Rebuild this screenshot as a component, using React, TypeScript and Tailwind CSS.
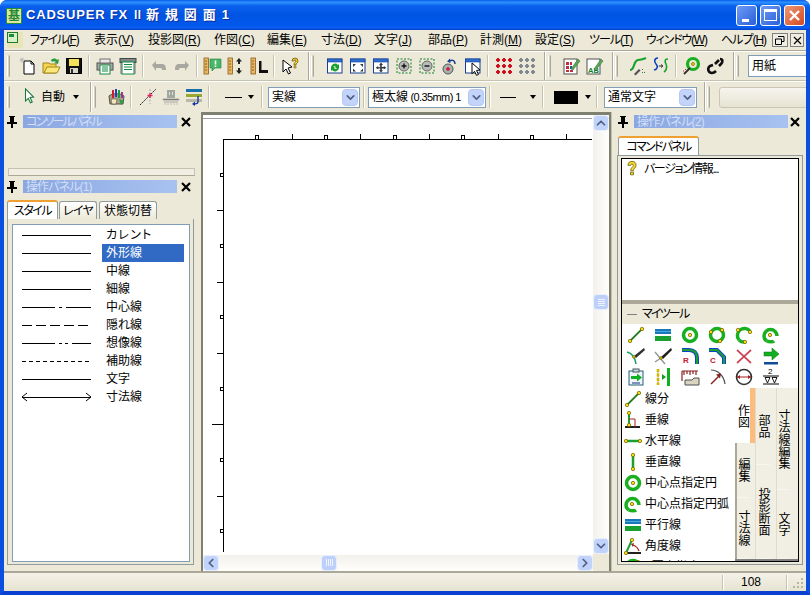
import React from 'react';
import { ChevronDown, ChevronUp, ChevronLeft, ChevronRight } from 'lucide-react';

const Svg: React.FC<{ children: React.ReactNode; s?: number }> = ({ children, s = 20 }) => (
    <svg width={s} height={s} viewBox="0 0 20 20" className="flex-none">{children}</svg>
);

const Dot = ({ x, y, r = 1.7 }: { x: number; y: number; r?: number }) => (
    <circle cx={x} cy={y} r={r} fill="#f6dc10" stroke="#6b5a00" strokeWidth="0.7" />
);

const Ruler = ({ x = 3 }: { x?: number }) => (
    <g>
        <rect x={x} y="2" width="4.5" height="16" fill="#e8b860" stroke="#8a5a20" strokeWidth="0.8" />
        <path d={`M${x + 1} 5h2M${x + 1} 8h2M${x + 1} 11h2M${x + 1} 14h2`} stroke="#7a4a10" strokeWidth="0.8" />
    </g>
);

const Win = ({ children }: { children?: React.ReactNode }) => (
    <g>
        <rect x="2.5" y="3" width="14.5" height="14" fill="#fff" stroke="#17408f" />
        <rect x="2.5" y="3" width="14.5" height="3" fill="#2e6fd6" stroke="#17408f" strokeWidth="0.6" />
        {children}
    </g>
);

const DotGrid = ({ c }: { c: string }) => (
    <g fill={c}>
        {[4, 10, 16].map(y => [4, 10, 16].map(x => (
            <path key={`${x}-${y}`} d={`M${x - 1} ${y - 2}h2v1h1v2h-1v1h-2v-1h-1v-2h1z`} />
        )))}
    </g>
);

const DashBox = ({ children }: { children: React.ReactNode }) => (
    <g>
        <rect x="3" y="3" width="14" height="14" fill="none" stroke="#108030" strokeDasharray="2 1.5" />
        <circle cx="10" cy="10" r="5" fill="#b8bcb8" stroke="#606860" />
        {children}
    </g>
);

const Sheet = ({ children }: { children: React.ReactNode }) => (
    <g>
        <rect x="3" y="3" width="13" height="15" fill="#fff" stroke="#505050" />
        {children}
        <path d="M10 13L17 3l2 2-7 9z" fill="#58a858" stroke="#306830" strokeWidth="0.5" />
    </g>
);

const I = {
    doc: <Svg><path d="M6 5h7l3 3v10H6z" fill="#fff" stroke="#000" /><path d="M13 5v3h3" fill="none" stroke="#000" /><path d="M4 1.5v5M1.5 4h5M2.5 2.5l3 3M5.5 2.5l-3 3" stroke="#b8b8b8" strokeWidth="1" /></Svg>,
    open: <Svg><path d="M2 7h6l1 1h6v9H2z" fill="#f5d34c" stroke="#a08820" /><path d="M3 17l3-6h13l-3 6z" fill="#fbe77a" stroke="#a08820" /><path d="M10 4c2-2 5-2 6 0l2-1-1 5-4-1 2-1c-1-1-3-1-4 0z" fill="#2a9a3a" /></Svg>,
    save: <Svg><rect x="2.5" y="2.5" width="15" height="15" fill="#101010" stroke="#000" /><rect x="5" y="3" width="10" height="7" fill="#f3e25a" /><rect x="6" y="12" width="8" height="5" fill="#d8d8c8" /><rect x="7" y="13" width="2" height="4" fill="#303030" /></Svg>,
    print: <Svg><rect x="2" y="7" width="16" height="7" fill="#a8a8a8" stroke="#505050" /><rect x="5" y="3" width="10" height="4" fill="#e8e8e8" stroke="#707070" /><rect x="5" y="9" width="10" height="9" fill="#fff" stroke="#108a40" /><path d="M7 11h6M7 13h6M7 15h6" stroke="#108a40" /></Svg>,
    plot: <Svg><rect x="2" y="2.5" width="16" height="4" fill="#808888" stroke="#404848" /><rect x="4" y="6" width="12" height="12" fill="#fff" stroke="#108a40" /><path d="M6 8.5h8M6 11h8M6 13.5h8" stroke="#108a40" /><path d="M3 7v11M17 7v11" stroke="#707070" /></Svg>,
    undo: <Svg><path d="M3 9l4-4v3h6c3 0 4 2 4 6h-4c0-2-1-2-3-2H7v3z" fill="#a8a8a0" /></Svg>,
    redo: <Svg><path d="M17 9l-4-4v3H7c-3 0-4 2-4 6h4c0-2 1-2 3-2h3v3z" fill="#a8a8a0" /></Svg>,
    rulerBalloon: <Svg><Ruler x={1} /><path d="M7 3h11v9h-6l-3 3v-3H7z" fill="#48b868" stroke="#208040" strokeWidth="0.6" /><path d="M12.5 4.5v4M12.5 9.5v1.5" stroke="#fff" strokeWidth="1.6" /></Svg>,
    rulerArrows: <Svg><Ruler x={2} /><path d="M13 2l3 3.5h-2V8h-2V5.5h-2zM13 18l3-3.5h-2V12h-2v2.5h-2z" fill="#202020" /></Svg>,
    rulerL: <Svg><Ruler x={2} /><path d="M10 5h2.5v9H19v3h-9z" fill="#101010" /></Svg>,
    cursorQ: <Svg><path d="M3 4l9 7-4 1 2.5 5-2 1-2.5-5-3 3z" fill="#fff" stroke="#000" /><path d="M12 5a3 3 0 116 0c0 2-2 2-2 4h-2c0-3 2-3 2-4a1 1 0 00-2 0z" fill="#f0d030" stroke="#604800" strokeWidth="0.7" /><rect x="14" y="10" width="2" height="2" fill="#f0d030" stroke="#604800" strokeWidth="0.5" /></Svg>,
    winCycle: <Svg><Win><path d="M6 11a4 4 0 017-2l1-1v4h-4l1-1a2 2 0 00-3 0zM14 12a4 4 0 01-7 2l-1 1v-4h4l-1 1a2 2 0 003 0z" fill="#18a030" /></Win></Svg>,
    winFit: <Svg><Win><path d="M5 8h3L5 11zM15 8h-3l3 3zM5 15.5h3l-3-3zM15 15.5h-3l3-3z" fill="#303840" /></Win></Svg>,
    winMove: <Svg><Win><path d="M10 6.5l2 2.5h-1.2v2h2V10l2.500 1.800-2.500 1.800v-1.200h-2v1.800H12l-2 2.200-2-2.200h1.200v-1.800h-2v1.200L4.700 11.800 7.200 10v1.200h2v-2H8z" fill="#303840" /></Win></Svg>,
    zoomIn: <Svg><DashBox><path d="M7.500 10h5M10 7.500v5" stroke="#101010" strokeWidth="1.400" /></DashBox></Svg>,
    zoomOut: <Svg><DashBox><path d="M7.500 10h5" stroke="#101010" strokeWidth="1.400" /></DashBox></Svg>,
    zoomBack: <Svg><circle cx="8" cy="13" r="5" fill="#a8b0b0" stroke="#505858" /><path d="M6 13h4M8 11v4" stroke="#d01828" strokeWidth="1.400" /><path d="M9 6c2-3 6-2 6 2" fill="none" stroke="#183a90" strokeWidth="1.400" /><path d="M10 2.500L7 5.500l3.500 1.500z" fill="#183a90" /></Svg>,
    winCursor: <Svg><Win /><path d="M9 7l8 7-3.500.5 2 4-2 .8-2-4-2.500 2.500z" fill="#fff" stroke="#000" /></Svg>,
    dotsRed: <Svg><DotGrid c="#d01020" /></Svg>,
    dotsGray: <Svg><DotGrid c="#808890" /></Svg>,
    sheetGrid: <Svg><Sheet><path d="M5 6h3v3H5zM9 6h2v3H9zM5 10h3v3H5zM5 14h3v2H5zM9 14h3v2H9z" fill="#c03040" /><path d="M9 10h2v3H9z" fill="#205890" /></Sheet></Svg>,
    sheetAB: <Svg><Sheet><text x="4" y="16.500" fontSize="7.500" fontWeight="700" fill="#108030" fontFamily="Liberation Sans">AB</text></Sheet></Svg>,
    sCurve: <Svg><path d="M2 14c5 0 3-9 8-10s3 0 8-2" fill="none" stroke="#18a030" strokeWidth="2.200" /><path d="M6 18l5-5 1.500 1.500-5 5z" fill="#505050" /><path d="M14 13l1 1M16 16l1 1M14 17l1-1" stroke="#308040" /></Svg>,
    sSplit: <Svg><path d="M7 2C3 2 3 6 5 8s2 5-2 6" fill="none" stroke="#1040c0" strokeWidth="1.600" /><path d="M17 3c-4 0-3 3-2 5s1 6-2 8" fill="none" stroke="#18a030" strokeWidth="1.600" /><path d="M8 10h3M10 8.500l2 1.500-2 1.500" stroke="#303030" fill="none" /></Svg>,
    ringWand: <Svg><circle cx="11" cy="8" r="5.500" fill="none" stroke="#18b020" strokeWidth="3.200" /><Dot x={11} y={8} r={1.500} /><path d="M2 18l6-6" stroke="#303030" strokeWidth="1.800" /><path d="M3 13l1 1M1 15h1" stroke="#c03040" /></Svg>,
    chain: <Svg><path d="M15 3c3 0 3 3 1 5l-2 2M8 9l-3 1c-3 2-2 7 2 7 2 0 3-1 4-2" fill="none" stroke="#101010" strokeWidth="2.600" /><path d="M14 4l-4 4" stroke="#101010" strokeWidth="2.600" /></Svg>,
    palette: <Svg><path d="M3 9c3-3 12-3 15 0l-1 8H4z" fill="#a8a090" stroke="#505040" /><rect x="6" y="3" width="2" height="8" fill="#d02030" /><rect x="9" y="2" width="2" height="8" fill="#2040c0" /><rect x="12" y="3" width="2" height="8" fill="#18a030" /><rect x="15" y="5" width="2" height="6" fill="#a030a0" /><path d="M5 12h6l-1 5H6z" fill="#f0e8c0" stroke="#605030" strokeWidth="0.6" /><path d="M13 12l5 2-3 4z" fill="#28a040" /></Svg>,
    cross: <Svg><path d="M2 18L11 9M13 7l5-5" stroke="#202020" strokeDasharray="2 1" /><path d="M12 2v15" stroke="#a8a8a8" strokeDasharray="2 1.500" /><path d="M12 6v5M9.500 8.500h5" stroke="#e02060" strokeWidth="1.400" /></Svg>,
    dim: <Svg><path d="M6 3h8v8H6z" fill="#a0a8a0" /><path d="M8 5h1v3H8zM11 5h1v3h-1z" fill="#e0e0d8" /><path d="M2 12h16v1H2zM3 15h14" stroke="#a8a8a0" /><path d="M3 17h14" stroke="#c0c0b8" strokeDasharray="2 1" /></Svg>,
    layers: <Svg><rect x="2" y="2" width="16" height="3" fill="#1870a8" /><rect x="2" y="7" width="16" height="3" fill="#98a830" /><rect x="2" y="12" width="16" height="3" fill="#b8b8a8" /><path d="M14 9v6c0 2-3 2-5 2" fill="none" stroke="#1838a0" strokeWidth="1.400" /><path d="M11 14.500L8 17l3 2z" fill="#1838a0" /></Svg>,
    help: <Svg s={18}><path d="M5.500 6a4.500 4.500 0 119 0c0 3-3 3-3 6H8.500c0-4 3-4 3-6a1.500 1.500 0 00-3 0z" fill="#f2dc30" stroke="#605000" strokeWidth="0.800" /><rect x="8.500" y="13.500" width="3" height="3" fill="#f2dc30" stroke="#605000" strokeWidth="0.800" /></Svg>,
    seg: <Svg><path d="M4 16L16 4" stroke="#3a9a30" strokeWidth="2" /><path d="M4 16L16 4" stroke="#203a20" strokeWidth="0.600" /><Dot x={4} y={16} /><Dot x={16} y={4} /></Svg>,
    para: <Svg><rect x="2" y="4" width="16" height="5" fill="#1878b8" /><rect x="2" y="6" width="16" height="1" fill="#48a8e0" /><rect x="2" y="11" width="16" height="5" fill="#18a030" /></Svg>,
    ring: <Svg><circle cx="10" cy="10" r="6.500" fill="#fff" stroke="#18b020" strokeWidth="3.500" /><Dot x={10} y={10} /></Svg>,
    ring3: <Svg><circle cx="10" cy="10" r="6.500" fill="none" stroke="#18b020" strokeWidth="3.500" /><Dot x={4} y={7} /><Dot x={15} y={5} /><Dot x={13} y={16} /></Svg>,
    arc3: <Svg><path d="M16 6A7 7 0 105 15" fill="none" stroke="#18b020" strokeWidth="3.500" /><path d="M5 15a7 7 0 006 2" fill="none" stroke="#18b020" strokeWidth="3.500" /><Dot x={4} y={5} /><Dot x={16} y={7} /><Dot x={11} y={17} /></Svg>,
    arcC: <Svg><path d="M16 11A6.500 6.500 0 103 11c0 2 1 4 3 5" fill="none" stroke="#18b020" strokeWidth="3.500" /><path d="M6 16c2 1 6 1 7 0" fill="none" stroke="#18b020" strokeWidth="3.500" /><Dot x={9} y={10} /></Svg>,
    curvePen: <Svg><path d="M1 6c4 1 8 5 9 12" fill="none" stroke="#18a060" strokeWidth="1.600" /><path d="M8 10L18 2l1 2-9 8z" fill="#303030" /><Dot x={8} y={11} r={1.300} /></Svg>,
    trimPen: <Svg><path d="M2 6l10 12M2 16l6-4" stroke="#909890" strokeWidth="1.400" /><path d="M8 11L18 2l1 2-9 9z" fill="#202020" /><Dot x={8} y={12} r={1.300} /></Svg>,
    filletR: <Svg><path d="M2 4h7c5 0 8 3 8 8v6" fill="none" stroke="#1040d0" strokeWidth="4" /><path d="M2 4h7c5 0 8 3 8 8v6" fill="none" stroke="#18a030" strokeWidth="2" /><text x="3" y="17" fontSize="8" fontWeight="700" fill="#c02030" fontFamily="Liberation Sans">R</text></Svg>,
    filletC: <Svg><path d="M2 4h8l7 7v7" fill="none" stroke="#1040d0" strokeWidth="4" /><path d="M2 4h8l7 7v7" fill="none" stroke="#18a030" strokeWidth="2" /><text x="3" y="17" fontSize="8" fontWeight="700" fill="#c02030" fontFamily="Liberation Sans">C</text></Svg>,
    redX: <Svg><path d="M3 4l14 13M17 4L3 17" stroke="#d87080" strokeWidth="2" /><path d="M3 4l14 13M17 4L3 17" stroke="#c02030" strokeWidth="0.800" /></Svg>,
    arrowBar: <Svg><path d="M3 6h8V2l7 6-7 6v-4H3z" fill="#10b020" stroke="#087010" strokeWidth="0.500" /><rect x="3" y="16" width="14" height="2.500" fill="#104a98" /></Svg>,
    clip: <Svg><rect x="3" y="4" width="14" height="14" fill="#f0f4f8" stroke="#206078" /><rect x="7" y="2" width="6" height="3" fill="#d0d8d8" stroke="#405860" /><path d="M5 9h6V6.500l5 4-5 4V12H5z" fill="#10b020" /><path d="M6 16h8" stroke="#103080" /></Svg>,
    mirror: <Svg><path d="M5 2v16" stroke="#f0d820" strokeWidth="3" strokeDasharray="3 1.500" /><path d="M5 2v16" stroke="#605000" strokeWidth="0.500" /><path d="M9 7l4 3-4 3z" fill="#10a020" /><rect x="14" y="1" width="3" height="18" fill="#10b020" /></Svg>,
    redRuler: <Svg><path d="M2 4h16M4 4v4M7 4v3M10 4v4M13 4v3M16 4v4M2 4v10" stroke="#8a2020" strokeWidth="1.200" fill="none" /><path d="M5 18v-5h7l2-2h5v7z" fill="#d8d4c0" stroke="#505050" /></Svg>,
    arrowArc: <Svg><path d="M4 3c7 0 13 6 14 14" fill="none" stroke="#505050" strokeWidth="1.200" /><path d="M4 17L13 8" stroke="#8a2020" strokeWidth="1.400" /><path d="M14 6.500l-1 5-4-4z" fill="#8a2020" /></Svg>,
    circleDim: <Svg><circle cx="10" cy="10" r="7.500" fill="#fff" stroke="#303030" strokeWidth="1.600" /><path d="M3 10h14" stroke="#a02020" /><path d="M3 10l3-2v4zM17 10l-3-2v4z" fill="#a02020" /></Svg>,
    triDim: <Svg><text x="7" y="7" fontSize="8" fill="#000" fontFamily="Liberation Sans">2</text><path d="M2 9h16M2 17h16" stroke="#000" /><path d="M4 10.500h5L6.500 16zM11 10.500h5L13.500 16z" fill="#fff" stroke="#000" strokeWidth="0.900" /></Svg>,
    perp: <Svg><path d="M6 2v14" stroke="#18a030" strokeWidth="2" /><path d="M2 17h15" stroke="#202020" strokeWidth="2" /><path d="M6 9h6v8" fill="none" stroke="#b02020" /><Dot x={6} y={3} /><Dot x={6} y={15} /></Svg>,
    horiz: <Svg><path d="M3 10h14" stroke="#18a030" strokeWidth="2.500" /><Dot x={3} y={10} /><Dot x={17} y={10} /></Svg>,
    vert: <Svg><path d="M10 3v14" stroke="#18a030" strokeWidth="2.500" /><Dot x={10} y={3} /><Dot x={10} y={17} /></Svg>,
    angle: <Svg><path d="M3 17L9 4" stroke="#18a030" strokeWidth="2" /><path d="M3 17h15" stroke="#202020" strokeWidth="2" /><path d="M10 9c3 1 5 3 6 6" fill="none" stroke="#a02020" strokeWidth="1.200" /><path d="M8 8l3-1-1 4z" fill="#a02020" /><Dot x={9} y={4} /><Dot x={3} y={17} /></Svg>,
};

const Grip = () => (
    <div className="h-[22px] w-[3px] flex-none border-l border-white bg-[#d6d2c0] border-r border-r-[#aca899] rounded-sm" />
);

const Sep = () => (
    <div className="flex w-[8px] flex-none justify-center">
        <div className="h-[22px] w-[2px] border-l border-[#c5c2b0] border-r border-r-white" />
    </div>
);

const Band = () => <div className="h-full w-[2px] flex-none border-l border-[#aca899] border-r border-r-white" />;

const Tool = ({ icon }: { icon: React.ReactNode }) => (
    <div className="flex h-[23px] w-[23px] flex-none items-center justify-center">{icon}</div>
);

const Caret = () => <div className="h-0 w-0 flex-none border-x-[3.5px] border-t-[4px] border-x-transparent border-t-black" />;

const Combo = ({ children, w }: { children: React.ReactNode; w: string }) => (
    <div className={`${w} flex h-[21px] flex-none items-center border border-[#7f9db9] bg-white pl-[3px] pr-[1px]`}>
        <span className="flex-1 overflow-hidden whitespace-nowrap text-[12px]">{children}</span>
        <div className="flex h-[17px] w-[16px] flex-none items-center justify-center rounded-sm border border-[#b5c8f3] bg-[#c3d3fa]">
            <ChevronDown size={13} strokeWidth={3} color="#4d6185" />
        </div>
    </div>
);

const ScrollBtn = ({ children }: { children: React.ReactNode }) => (
    <div className="flex h-[16px] w-[16px] flex-none items-center justify-center rounded-sm border border-[#e8effd] bg-[#c1d3fb]">{children}</div>
);

const ScrollThumb = ({ vertical }: { vertical?: boolean }) => (
    <div className={`flex h-[16px] w-[16px] flex-none items-center justify-center rounded-sm border border-[#e8effd] bg-[#bdd0fa] ${vertical ? 'flex-col gap-[1px]' : 'gap-[1px]'}`}>
        {[0, 1, 2, 3].map(i => (
            <div key={i} className={vertical ? 'h-[1px] w-[7px] bg-[#eef3fe]' : 'h-[7px] w-[1px] bg-[#eef3fe]'} />
        ))}
    </div>
);

const Pin = () => (
    <svg width="10" height="12" viewBox="0 0 10 12" className="flex-none">
        <path d="M2 0h6v1H7v5h3v2H6v4H4V8H0V6h3V1H2z" fill="#000" />
    </svg>
);

const PanelClose = () => (
    <svg width="10" height="10" viewBox="0 0 10 10" className="flex-none">
        <path d="M1 1l8 8M9 1L1 9" stroke="#000" strokeWidth="2.200" />
    </svg>
);

const PanelHeader = ({ title, pinClass, closeClass, titleClass }: { title: string; pinClass: string; closeClass: string; titleClass: string }) => (
    <div className="flex h-[13px] flex-none items-center">
        <div className={`flex flex-none justify-center ${pinClass}`}><Pin /></div>
        <div className={`${titleClass} flex h-[13px] w-[154px] flex-none items-center bg-[linear-gradient(90deg,#8aa7e1,#a8c2f0)] pl-[3px] text-[12px] leading-none text-[#d3dff7]`}>{title}</div>
        <div className={`flex flex-1 justify-center ${closeClass}`}><PanelClose /></div>
    </div>
);

const MENUS: [string, string, string][] = [
    ['ファイル(', 'F', 'w-[64px] tracking-[-1.2px]'],
    ['表示(', 'V', 'w-[54px]'],
    ['投影図(', 'R', 'w-[66px]'],
    ['作図(', 'C', 'w-[53px]'],
    ['編集(', 'E', 'w-[54px]'],
    ['寸法(', 'D', 'w-[53px]'],
    ['文字(', 'J', 'w-[54px]'],
    ['部品(', 'P', 'w-[52px]'],
    ['計測(', 'M', 'w-[55px]'],
    ['設定(', 'S', 'w-[54px]'],
    ['ツール(', 'T', 'w-[57px] tracking-[-1px]'],
    ['ウィンドウ(', 'W', 'w-[75px] tracking-[-1.2px]'],
    ['ヘルプ(', 'H', 'w-[51px] tracking-[-1px]'],
];

const LINE_STYLES = ['カレント', '外形線', '中線', '細線', '中心線', '隠れ線', '想像線', '補助線', '文字', '寸法線'];

const LineSample = ({ index }: { index: number }) => {
    const dash = index === 4 ? '33 4 3 4 26' : index === 5 ? '10 4' : index === 6 ? '33 4 3 3 3 4 20' : index === 7 ? '4 3' : undefined;
    return (
        <svg width="72" height="18" viewBox="0 0 72 18" className="flex-none" shapeRendering="crispEdges">
            <line x1="1" y1="9" x2="70" y2="9" stroke="#000" strokeDasharray={dash} />
            {index === 9 && (
                <g shapeRendering="auto">
                    <path d="M6 5L1 9l5 4M65 5l5 4-5 4" fill="none" stroke="#000" />
                </g>
            )}
        </svg>
    );
};

const MY_TOOLS = [
    I.seg, I.para, I.ring, I.ring3, I.arc3, I.arcC,
    I.curvePen, I.trimPen, I.filletR, I.filletC, I.redX, I.arrowBar,
    I.clip, I.mirror, I.redRuler, I.arrowArc, I.circleDim, I.triDim,
];

const COMMANDS: [React.ReactNode, string][] = [
    [I.seg, '線分'],
    [I.perp, '垂線'],
    [I.horiz, '水平線'],
    [I.vert, '垂直線'],
    [I.ring, '中心点指定円'],
    [I.arcC, '中心点指定円弧'],
    [I.para, '平行線'],
    [I.angle, '角度線'],
    [I.ring3, '3要素指定円'],
];

const SideTab = ({ text, h }: { text: string; h: string }) => (
    <div className={`${h} flex items-center justify-center border-b border-[#f7f6ef]`}>
        <span className="text-[12px] leading-none [writing-mode:vertical-rl]">{text}</span>
    </div>
);

// 図枠の目盛り（座標はウィンドウ基準のまま）
const Sheet2D = () => (
    <svg width="389" height="437" viewBox="203 116 389 437" className="block" shapeRendering="crispEdges">
        <line x1="203" y1="119.500" x2="592" y2="119.500" stroke="#a0a0a0" />
        <path d="M223.500 553V140.500H592" fill="none" stroke="#000" />
        {[257, 326, 395, 463, 532].map(x => <rect key={x} x={x - 1.500} y="136.500" width="3" height="4" fill="none" stroke="#000" />)}
        {[292, 360, 429, 498, 566].map(x => <line key={x} x1={x + 0.500} y1="135" x2={x + 0.500} y2="140" stroke="#000" />)}
        {[176, 247, 318, 390, 461, 532].map(y => <rect key={y} x="220" y={y - 1.500} width="3" height="3" fill="none" stroke="#000" />)}
        {[211, 283, 354, 497].map(y => <line key={y} x1="217" y1={y + 0.500} x2="223" y2={y + 0.500} stroke="#000" />)}
        <line x1="212" y1="425.500" x2="223" y2="425.500" stroke="#000" />
    </svg>
);

const App: React.FC = () => {
    return (
        <div className="flex h-[595px] w-[810px] flex-col overflow-hidden rounded-t-[7px] bg-[#0a4fe0] font-['Liberation_Sans','Noto_Sans_CJK_JP',sans-serif] text-black [font-feature-settings:'palt']">
            {/* title bar */}
            <div className="flex h-[30px] flex-none items-center bg-[linear-gradient(180deg,#0a5fe8_0%,#2b90ff_8%,#0a60ec_20%,#0054e3_50%,#0058ec_85%,#0a5df0_92%,#0040c8_100%)] pl-[6px]">
                <div className="mt-[2px] flex h-[16px] w-[16px] flex-none items-center justify-center border border-[#2a8a40] bg-[#dfe8a0] text-[12px] font-bold leading-none text-[#1f8a3a]">基</div>
                <div className="ml-[4px] flex items-center whitespace-pre text-[13px] font-bold text-white [text-shadow:1px_1px_0_#0f2f9a]">
                    <span className="tracking-[0.8px]">CADSUPER FX</span>
                    <span className="ml-[4px] w-[10px] text-[11px]">Ⅱ</span>
                    <span className="ml-[4px] tracking-[1.15px]">新 規 図 面 1</span>
                </div>
                <div className="ml-auto mr-[5px] flex gap-[3px]">
                    <div className="flex h-[21px] w-[21px] items-end justify-start rounded-[3px] border border-white bg-[linear-gradient(135deg,#6d9cf5,#2a5fd8)] pb-[3px] pl-[5px]">
                        <div className="h-[3px] w-[7px] bg-white" />
                    </div>
                    <div className="flex h-[21px] w-[21px] items-center justify-center rounded-[3px] border border-white bg-[linear-gradient(135deg,#6d9cf5,#2a5fd8)]">
                        <div className="h-[12px] w-[13px] border border-t-[3px] border-white" />
                    </div>
                    <div className="flex h-[21px] w-[21px] items-center justify-center rounded-[3px] border border-white bg-[linear-gradient(135deg,#ea9a78,#d6481e)]">
                        <svg width="13" height="13" viewBox="0 0 13 13"><path d="M2 2l9 9M11 2l-9 9" stroke="#fff" strokeWidth="2.400" /></svg>
                    </div>
                </div>
            </div>

            <div className="flex min-h-0 flex-1 flex-col overflow-hidden border-x-4 border-b-4 border-x-[#0a4fe0] border-b-[#0a3fd0] bg-[#ece9d8]">
                {/* menu bar */}
                <div className="flex h-[21px] flex-none items-center border-b border-[#aca899] text-[12px]">
                    <div className="ml-[3px] mr-[7px] flex h-[16px] w-[16px] flex-none items-start bg-[#e8e6b8]">
                        <div className="h-[11px] w-[11px] border border-[#1f7a2c] bg-[#d8f0c8]">
                            <div className="m-[1px] h-[3px] w-[5px] bg-[#1f8a3a]" />
                        </div>
                    </div>
                    {MENUS.map(([label, key, w]) => (
                        <div key={key} className={`${w} flex-none whitespace-nowrap`}>{label}<span className="underline">{key}</span>)</div>
                    ))}
                    <div className="flex h-[14px] w-[16px] flex-none items-center justify-center border border-[#808080] bg-[#f0eee2]">
                        <svg width="10" height="9" viewBox="0 0 10 9"><path d="M3 .5h6v5H7M.5 3h6v5.500h-6z" fill="none" stroke="#000" /></svg>
                    </div>
                    <div className="ml-[2px] flex h-[14px] w-[14px] flex-none items-center justify-center border border-[#808080] bg-[#f0eee2]">
                        <svg width="9" height="9" viewBox="0 0 9 9"><path d="M1 1l7 7M8 1L1 8" stroke="#000" strokeWidth="1.200" /></svg>
                    </div>
                </div>

                {/* standard toolbar */}
                <div className="flex h-[30px] flex-none items-center overflow-hidden border-b border-t border-b-[#c5c2b0] border-t-white">
                    <div className="w-[3px] flex-none" /><Grip /><div className="w-[6px] flex-none" />
                    <Tool icon={I.doc} /><Tool icon={I.open} /><Tool icon={I.save} />
                    <Sep />
                    <Tool icon={I.print} /><Tool icon={I.plot} />
                    <Sep />
                    <Tool icon={I.undo} /><Tool icon={I.redo} />
                    <Sep />
                    <Tool icon={I.rulerBalloon} /><Tool icon={I.rulerArrows} /><Tool icon={I.rulerL} />
                    <Sep />
                    <Tool icon={I.cursorQ} />
                    <div className="w-[7px] flex-none" /><Band /><div className="w-[1px] flex-none" /><Grip /><div className="w-[9px] flex-none" />
                    <Tool icon={I.winCycle} /><Tool icon={I.winFit} /><Tool icon={I.winMove} /><Tool icon={I.zoomIn} /><Tool icon={I.zoomOut} /><Tool icon={I.zoomBack} /><Tool icon={I.winCursor} />
                    <Sep />
                    <Tool icon={I.dotsRed} /><Tool icon={I.dotsGray} />
                    <div className="w-[6px] flex-none" /><Band /><div className="w-[2px] flex-none" /><Grip /><div className="w-[8px] flex-none" />
                    <Tool icon={I.sheetGrid} /><Tool icon={I.sheetAB} />
                    <div className="w-[7px] flex-none" /><Band /><div className="w-[1px] flex-none" /><Grip /><div className="w-[8px] flex-none" />
                    <Tool icon={I.sCurve} /><Tool icon={I.sSplit} />
                    <Sep />
                    <Tool icon={I.ringWand} /><Tool icon={I.chain} />
                    <div className="w-[7px] flex-none" /><Band /><div className="w-[1px] flex-none" /><Grip /><div className="w-[9px] flex-none" />
                    <div className="flex h-[22px] w-[70px] flex-none items-center border border-[#7f9db9] bg-white pl-[3px] text-[12px]">用紙</div>
                </div>

                {/* property toolbar */}
                <div className="flex h-[31px] flex-none items-center overflow-hidden border-t border-white">
                    <div className="w-[3px] flex-none" /><Grip />
                    <div className="ml-[11px] flex w-[69px] flex-none items-center">
                        <Svg s={18}><path d="M5 1l9 9-4 .5 2.500 5-2 1-2.500-5L5 14.500z" fill="#fff" stroke="#18783a" strokeWidth="1.200" /></Svg>
                        <span className="ml-[2px] text-[12px]">自動</span>
                        <div className="ml-[8px]"><Caret /></div>
                    </div>
                    <Band /><div className="w-[1px] flex-none" /><Grip /><div className="w-[8px] flex-none" />
                    <Tool icon={I.palette} />
                    <Sep />
                    <div className="w-[1px] flex-none" />
                    <Tool icon={I.cross} /><Tool icon={I.dim} /><Tool icon={I.layers} />
                    <Sep />
                    <div className="ml-[12px] h-[1px] w-[17px] flex-none bg-black" />
                    <div className="ml-[6px]"><Caret /></div>
                    <div className="w-[4px] flex-none" /><Sep />
                    <div className="w-[2px] flex-none" />
                    <Combo w="w-[92px]">実線</Combo>
                    <Sep />
                    <Combo w="w-[118px]">極太線<span className="text-[11px] tracking-[-0.6px]"> (0.35mm) 1</span></Combo>
                    <Sep />
                    <div className="ml-[6px] h-[1px] w-[16px] flex-none bg-black" />
                    <div className="ml-[14px]"><Caret /></div>
                    <div className="w-[3px] flex-none" /><Sep />
                    <div className="ml-[7px] h-[13px] w-[24px] flex-none bg-black" />
                    <div className="ml-[7px]"><Caret /></div>
                    <div className="w-[2px] flex-none" /><Sep />
                    <div className="w-[3px] flex-none" />
                    <Combo w="w-[93px]">通常文字</Combo>
                    <div className="w-[7px] flex-none" /><Band /><div className="w-[1px] flex-none" /><Grip /><div className="w-[9px] flex-none" />
                    <div className="h-[21px] w-[90px] flex-none rounded-[3px] border border-[#c9c6b6] bg-[linear-gradient(180deg,#f6f5ee,#e6e3d2)]" />
                </div>

                {/* work area */}
                <div className="flex min-h-0 flex-1 border-b-2 border-[#aca899]">
                    {/* left dock */}
                    <div className="flex w-[197px] flex-none flex-col pt-[3px]">
                        <PanelHeader title="コンソールパネル" pinClass="w-[19px] pr-[4px]" closeClass="pr-[6px]" titleClass="tracking-[-1.8px]" />
                        <div className="h-[40px] flex-none" />
                        <div className="ml-[4px] mr-[6px] h-[8px] flex-none border border-[#c5c2b0] border-b-[#aca899] bg-[#f1efe3]" />
                        <div className="h-[4px] flex-none" />
                        <PanelHeader title="操作パネル(1)" pinClass="w-[19px] pr-[4px]" closeClass="pr-[6px]" titleClass="tracking-[-0.9px]" />
                        <div className="ml-[3px] mt-[7px] flex h-[19px] flex-none items-end text-[12px]">
                            <div className="flex h-[19px] w-[51px] items-center justify-center rounded-t-[3px] border-x border-[#919b9c] border-t-2 border-t-[#f0a030] bg-white tracking-[-1.5px]">スタイル</div>
                            <div className="ml-[1px] flex h-[18px] w-[38px] items-center justify-center rounded-t-[3px] border border-b-0 border-[#919b9c] bg-[linear-gradient(180deg,#fff,#ece9d8)] tracking-[-0.7px]">レイヤ</div>
                            <div className="ml-[2px] flex h-[18px] w-[58px] items-center justify-center rounded-t-[3px] border border-b-0 border-[#919b9c] bg-[linear-gradient(180deg,#fff,#ece9d8)]">状態切替</div>
                        </div>
                        <div className="ml-[3px] mr-[7px] flex-1 border border-t-0 border-[#919b9c] pb-[2px] pl-[4px] pr-[3px] pt-[5px]">
                            <div className="h-full border border-[#7f9db9] bg-white pt-[1px]">
                                {LINE_STYLES.map((name, i) => (
                                    <div key={name} className="flex h-[18px] items-center pl-[8px]">
                                        <LineSample index={i} />
                                        <div className={`ml-[9px] flex h-[18px] w-[82px] items-center pl-[4px] text-[12px] ${i === 1 ? 'bg-[#316ac5] text-white' : ''} ${i === 0 ? 'tracking-[1.2px]' : ''}`}>{name}</div>
                                    </div>
                                ))}
                            </div>
                        </div>
                        <div className="h-[6px] flex-none" />
                    </div>

                    {/* drawing area */}
                    <div className="flex w-[410px] flex-none flex-col border-l-2 border-r-2 border-t-[3px] border-[#808070] bg-white">
                        <div className="flex min-h-0 flex-1">
                            <div className="min-w-0 flex-1 overflow-hidden"><Sheet2D /></div>
                            <div className="flex w-[16px] flex-none flex-col bg-[linear-gradient(90deg,#f3f1ec,#fefefb)]">
                                <ScrollBtn><ChevronUp size={14} strokeWidth={3} color="#4d6185" /></ScrollBtn>
                                <div className="h-[163px] flex-none" />
                                <ScrollThumb vertical />
                                <div className="flex-1" />
                                <ScrollBtn><ChevronDown size={14} strokeWidth={3} color="#4d6185" /></ScrollBtn>
                            </div>
                        </div>
                        <div className="flex h-[17px] flex-none items-center">
                            <div className="flex flex-1 items-center bg-[linear-gradient(180deg,#f3f1ec,#fefefb)]">
                                <ScrollBtn><ChevronLeft size={14} strokeWidth={3} color="#4d6185" /></ScrollBtn>
                                <div className="w-[102px] flex-none" />
                                <ScrollThumb />
                                <div className="flex-1" />
                                <ScrollBtn><ChevronRight size={14} strokeWidth={3} color="#4d6185" /></ScrollBtn>
                            </div>
                            <div className="h-[17px] w-[16px] flex-none bg-[#ece9d8]" />
                        </div>
                    </div>

                    {/* right dock */}
                    <div className="flex min-w-0 flex-1 flex-col border-l border-[#c5c2b0] pt-[3px]">
                        <PanelHeader title="操作パネル(2)" pinClass="w-[22px]" closeClass="pr-[4px]" titleClass="tracking-[-0.7px]" />
                        <div className="ml-[6px] mt-[8px] flex h-[19px] w-[81px] flex-none items-center justify-center rounded-t-[3px] border-x border-[#919b9c] border-t-2 border-t-[#f0a030] bg-white text-[12px] tracking-[-1.7px]">コマンドパネル</div>
                        <div className="mb-[6px] ml-[5px] mr-[3px] flex min-h-0 flex-1 flex-col border border-[#919b9c] px-[3px] pb-[2px] pt-[2px]">
                            <div className="flex min-h-0 flex-1 flex-col border border-black bg-white">
                                <div className="flex h-[141px] flex-none items-start">
                                    <div className="ml-[1px] mt-[1px] flex h-[18px] items-center text-[12px]">
                                        {I.help}
                                        <span className="ml-[3px] tracking-[-1.4px]">バージョン情報...</span>
                                    </div>
                                </div>
                                <div className="h-[4px] flex-none bg-[#aca899]" />
                                <div className="flex h-[20px] flex-none items-center bg-[#ece9d8] pl-[5px] text-[12px]">
                                    <div className="h-[1px] w-[10px] bg-[#808080]" />
                                    <span className="ml-[5px] tracking-[-1.8px]">マイツール</span>
                                </div>
                                <div className="grid h-[64px] flex-none grid-cols-[repeat(6,27px)] items-center justify-items-center">
                                    {MY_TOOLS.map((icon, i) => <div key={i}>{icon}</div>)}
                                </div>
                                <div className="flex min-h-0 flex-1">
                                    <div className="min-w-0 flex-1 overflow-hidden">
                                        {COMMANDS.map(([icon, name]) => (
                                            <div key={name} className="flex h-[21px] items-center whitespace-nowrap pl-[1px] text-[12px]">
                                                {icon}
                                                <span className="ml-[2px]">{name}</span>
                                            </div>
                                        ))}
                                    </div>
                                    <div className="flex w-[63px] flex-none border-b-2 border-[#808080] bg-[#f1efe3]">
                                        <div className="flex w-[20px] flex-none flex-col">
                                            <div className="flex h-[55px] flex-none">
                                                <div className="flex w-[15px] flex-none items-center justify-center bg-white text-[12px] leading-none"><span className="[writing-mode:vertical-rl]">作図</span></div>
                                                <div className="w-[5px] flex-none bg-[#fdbb7c]" />
                                            </div>
                                            <div className="flex flex-1 flex-col border-l-[2px] border-[#aca899] pr-[6px]">
                                                <SideTab text="編集" h="h-[55px] flex-none" />
                                                <SideTab text="寸法線" h="flex-1" />
                                            </div>
                                        </div>
                                        <div className="flex w-[21px] flex-none flex-col border-l border-[#dfdccb] pr-[6px]">
                                            <SideTab text="部品" h="h-[77px] flex-none" />
                                            <SideTab text="投影断面" h="flex-1" />
                                        </div>
                                        <div className="flex w-[21px] flex-none flex-col border-l border-[#dfdccb] pr-[8px]">
                                            <SideTab text="寸法線編集" h="h-[102px] flex-none" />
                                            <SideTab text="文字" h="flex-1" />
                                        </div>
                                    </div>
                                </div>
                            </div>
                        </div>
                    </div>
                </div>

                {/* status bar */}
                <div className="flex h-[18px] flex-none items-center bg-[linear-gradient(180deg,#f4f2e8,#e6e3d2)] text-[12px]">
                    <div className="flex-1" />
                    <div className="h-[15px] w-[2px] flex-none border-l border-[#c5c2b0] border-r border-r-white" />
                    <div className="w-[62px] flex-none pr-[8px] text-center">108</div>
                    <div className="h-[15px] w-[2px] flex-none border-l border-[#c5c2b0] border-r border-r-white" />
                    <div className="flex h-[18px] w-[18px] flex-none items-end justify-end pb-[2px] pr-[2px]">
                        <svg width="12" height="12" viewBox="0 0 12 12">
                            <path d="M9 1h2v2H9zM5 5h2v2H5zM9 5h2v2H9zM1 9h2v2H1zM5 9h2v2H5zM9 9h2v2H9z" fill="#b8b5a2" />
                        </svg>
                    </div>
                </div>
            </div>
        </div>
    );
};

export default App;
